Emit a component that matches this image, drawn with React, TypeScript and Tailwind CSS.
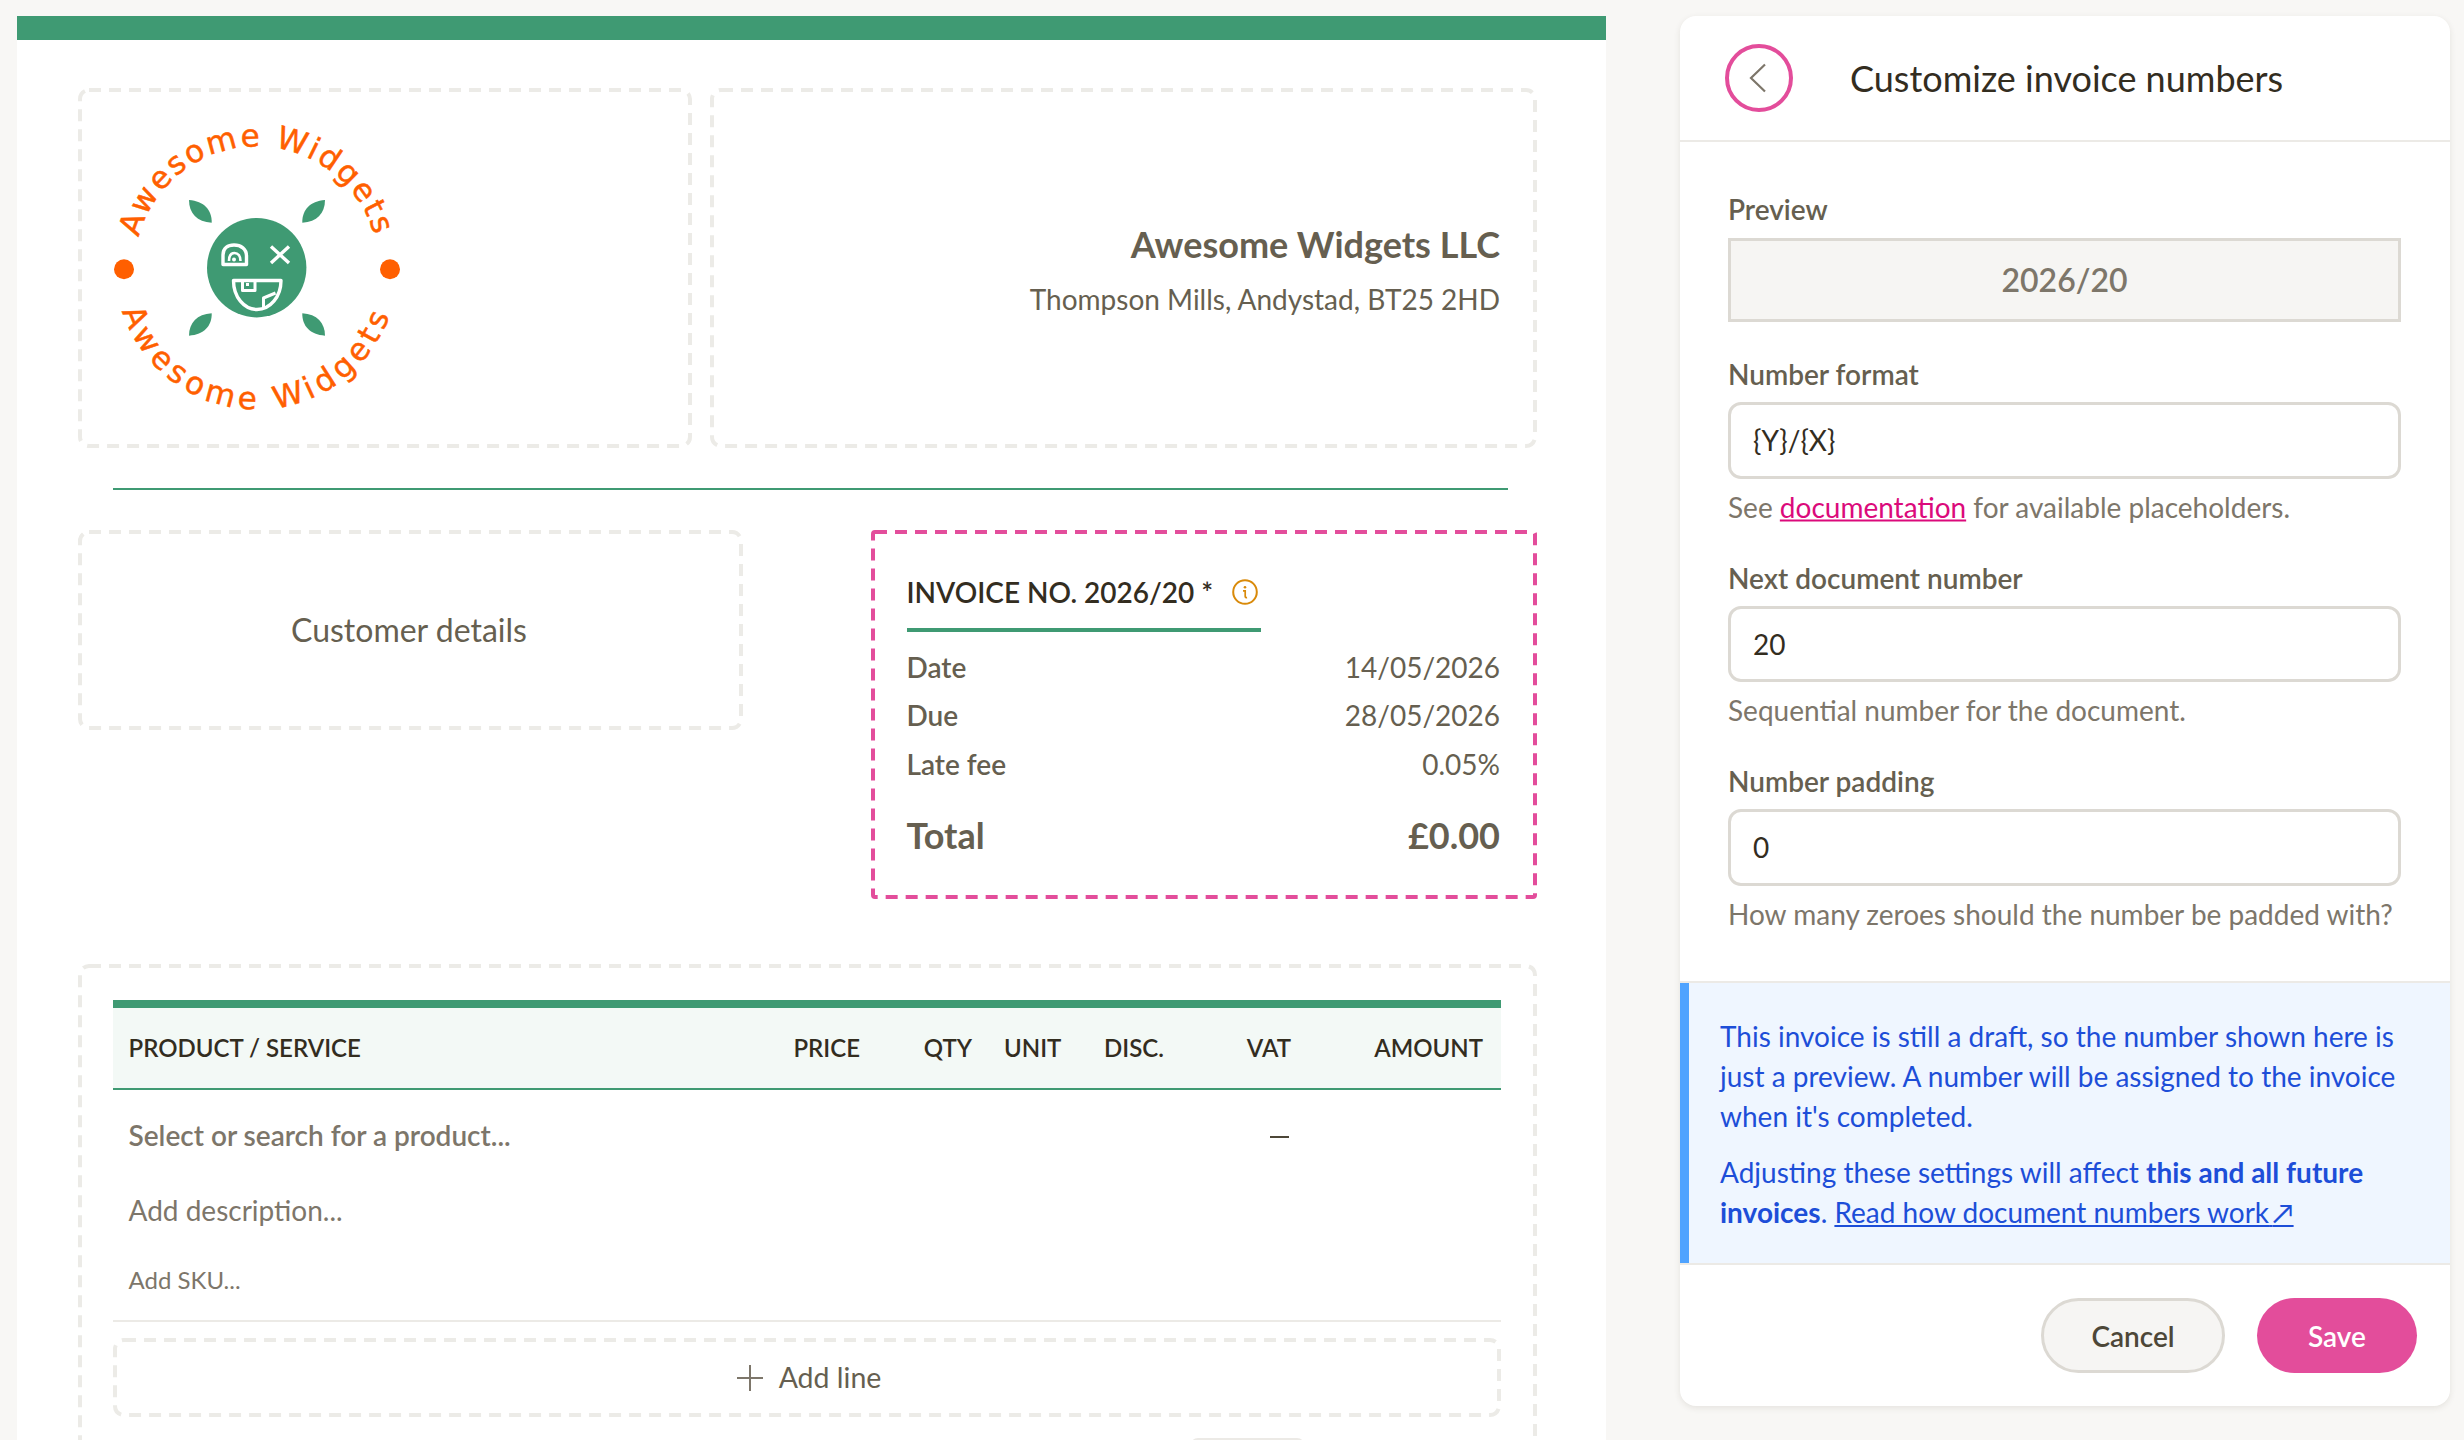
import React from "react";

function DashedBorder({ pink = false }: { pink?: boolean }) {
  return (
    <svg className="absolute inset-0 w-full h-full pointer-events-none" aria-hidden="true">
      <rect
        x="2"
        y="2"
        className="w-[calc(100%-4px)] h-[calc(100%-4px)]"
        rx={pink ? 2 : 9}
        fill="none"
        stroke={pink ? "#e34d9b" : "#ecebe7"}
        strokeWidth="4"
        strokeDasharray="12 8"
      />
    </svg>
  );
}

function Logo() {
  const green = "#3f9a73";
  const orange = "#ff5f00";
  return (
    <svg width="340" height="340" viewBox="0 0 340 340" className="block">
      <defs>
        <path id="arcTop" d="M 35.2 157.4 A 122 122 0 0 1 278.2 157.4" />
        <path id="arcBottom" d="M 16.2 180.3 A 141 141 0 0 0 297.2 180.3" />
      </defs>
      <text fontFamily="'DejaVu Sans', sans-serif" fontSize="31" fill={orange} stroke={orange} strokeWidth="0.5" letterSpacing="2.4" textAnchor="middle">
        <textPath href="#arcTop" startOffset="50%">Awesome Widgets</textPath>
      </text>
      <text fontFamily="'DejaVu Sans', sans-serif" fontSize="31" fill={orange} stroke={orange} strokeWidth="0.5" letterSpacing="4.8" textAnchor="middle">
        <textPath href="#arcBottom" startOffset="50%">Awesome Widgets</textPath>
      </text>
      <circle cx="24" cy="169.3" r="10" fill={orange} />
      <circle cx="290" cy="169.3" r="10" fill={orange} />
      <circle cx="156.7" cy="167.7" r="49.7" fill={green} />
      <path d="M89 100 C104 101 112 110 111.7 122.7 C97 122 89 113 89 100Z" fill={green} />
      <path d="M225 100 C210 101 202 110 202.3 122.7 C217 122 225 113 225 100Z" fill={green} />
      <path d="M89 235.7 C104 234.7 112 226 111.7 213.3 C97 214 89 223 89 235.7Z" fill={green} />
      <path d="M225 235.7 C210 234.7 202 226 202.3 213.3 C217 214 225 223 225 235.7Z" fill={green} />
      <g fill="none" stroke="#fff" strokeWidth="3.4" strokeLinejoin="round">
        <path d="M123 164.5 V155 C123 148 128 145 134 145 C141 145 146.5 149 146.5 156 V164.5 Z" />
        <path d="M129 161 C129 155 131 153 134.5 153 C138 153 140.5 156 140.5 161" strokeWidth="2.6" />
        <path d="M171 146.5 L189 163 M189 146.5 L171 163" />
        <path d="M133.5 180.5 H181 C181 197 170 209.5 157 209.5 C144 209.5 133.5 197 133.5 180.5Z" />
        <path d="M142.5 181 V190.5 H155 V181" strokeWidth="3" />
        <path d="M163.5 207 V198 L175.5 193" strokeWidth="3" />
      </g>
      <circle cx="134" cy="159.5" r="2" fill="#fff" />
      <rect x="146" y="183" width="3" height="3" fill="#fff" />
    </svg>
  );
}

function Field({ label, value, hint }: { label: string; value: string; hint: React.ReactNode }) {
  return (
    <div className="mb-[35px]">
      <div className="h-[36px] leading-[36px] mb-[10px] text-[28px] font-semibold text-[#665f50]">{label}</div>
      <div className="h-[76.5px] border-[3px] border-[#dcd9d3] rounded-[13px] flex items-center pl-[22px] text-[28px] text-[#332d1f] bg-white">
        {value}
      </div>
      <div className="h-[36px] leading-[36px] mt-[10px] -translate-y-[0.5px] text-[28px] text-[#7d766a] whitespace-nowrap">{hint}</div>
    </div>
  );
}

const grid = "grid grid-cols-[667px_96px_112px_100px_112px_107px_194px]";

export default function App() {
  return (
    <div className="w-[2464px] h-[1440px] overflow-hidden bg-[#f8f7f5] flex items-start pt-[16px] pl-[17px] gap-[74px] font-['Lato',sans-serif]">
      {/* Invoice page */}
      <div className="w-[1589px] h-[1424px] bg-white overflow-hidden flex-none">
        <div className="h-[24px] bg-[#3f9a73]" />
        <div className="pl-[61px] pr-[69px] pt-[48px]">
          <div className="flex gap-[18px] h-[360px]">
            <div className="relative w-[614px] h-full pl-[22px] pt-[12px]">
              <DashedBorder />
              <Logo />
            </div>
            <div className="relative flex-1 h-full pr-[37px] flex flex-col items-end pt-[132px]">
              <DashedBorder />
              <div className="text-[36px] leading-[48px] font-bold text-[#665f50]">Awesome Widgets LLC</div>
              <div className="text-[28px] leading-[40px] mt-[11px] text-[#665f50]">Thompson Mills, Andystad, BT25 2HD</div>
            </div>
          </div>

          <div className="mt-[40px] ml-[35px] mr-[29px] h-[2px] bg-[#3f9a73]" />

          <div className="mt-[40px] flex justify-between items-start">
            <div className="relative w-[665px] h-[200px] flex items-center justify-center">
              <DashedBorder />
              <span className="text-[32px] leading-[40px] text-[#665f50] mr-[3px]">Customer details</span>
            </div>
            <div className="relative w-[666px] h-[369px] pl-[35.5px] pr-[37px] pt-[36px]">
              <DashedBorder pink />
              <div className="w-[354px] border-b-[4px] border-[#3f9a73] h-[66px] flex items-start">
                <span className="text-[28px] leading-[52px] font-semibold text-[#332d1f] whitespace-nowrap">INVOICE NO. 2026/20 *</span>
                <svg width="26" height="26" viewBox="0 0 26 26" className="ml-[19px] mt-[13px] flex-none" fill="none">
                  <circle cx="13" cy="13" r="11.8" stroke="#d98a0a" strokeWidth="2" />
                  <circle cx="13" cy="8.2" r="1.3" fill="#d98a0a" />
                  <path d="M11 11.8 H13.2 V17.6 C13.2 18.6 13.8 18.8 15 18.4" stroke="#d98a0a" strokeWidth="1.7" />
                </svg>
              </div>
              <div className="mt-[10.5px] text-[28px] text-[#665f50]">
                <div className="h-[48.5px] flex items-center justify-between"><span className="font-semibold">Date</span><span>14/05/2026</span></div>
                <div className="h-[48.5px] flex items-center justify-between"><span className="font-semibold">Due</span><span>28/05/2026</span></div>
                <div className="h-[48.5px] flex items-center justify-between"><span className="font-semibold">Late fee</span><span>0.05%</span></div>
              </div>
              <div className="mt-[22px] h-[50px] flex items-center justify-between text-[36px] font-bold text-[#665f50]">
                <span>Total</span>
                <span>£0.00</span>
              </div>
            </div>
          </div>

          <div className="relative mt-[65px] h-[700px] pl-[35px] pr-[36px] pt-[36px]">
            <DashedBorder />
            <div className="h-[90px] border-t-[8px] border-b-[2px] border-[#3f9a73] bg-[#f3f9f6]">
              <div className={`${grid} h-full items-center text-[24px] font-semibold text-[#332d1f]`}>
                <div className="pl-[15.5px]">PRODUCT / SERVICE</div>
                <div className="text-right pr-[16px]">PRICE</div>
                <div className="text-right pr-[16px]">QTY</div>
                <div className="pl-[16px]">UNIT</div>
                <div className="pl-[16px]">DISC.</div>
                <div className="text-right pr-[16px]">VAT</div>
                <div className="text-right pr-[18px]">AMOUNT</div>
              </div>
            </div>
            <div className={`${grid} h-[94px] items-center text-[28px]`}>
              <div className="pl-[15.5px] -mt-[4px] font-semibold text-[#7d766a] whitespace-nowrap">Select or search for a product...</div>
              <div />
              <div />
              <div />
              <div />
              <div className="flex justify-end pr-[18px]"><div className="w-[19px] h-[2.5px] bg-[#4d4738]" /></div>
              <div />
            </div>
            <div className="h-[52px] leading-[52px] pl-[15.5px] text-[28px] text-[#7d766a]">Add description...</div>
            <div className="mt-[18px] h-[52px] leading-[52px] pl-[15.5px] text-[24px] text-[#7d766a]">Add SKU...</div>
            <div className="mt-[14px] h-[2px] bg-[#eceae6]" />
            <div className="relative mt-[16px] h-[79px] flex items-center justify-center gap-[15px] text-[28.5px] text-[#665f50] pl-[3px]">
              <DashedBorder />
              <svg width="28" height="28" viewBox="0 0 28 28" fill="none" stroke="#7d766a" strokeWidth="2">
                <path d="M14 1 V27 M1 14 H27" />
              </svg>
              <span>Add line</span>
            </div>
            <div className="mt-[21px] ml-[1077px] w-[115px] h-[8px] rounded-t-[8px] bg-[#eceae6]" />
          </div>
        </div>
      </div>

      {/* Side panel */}
      <div className="w-[770px] h-[1390px] bg-white rounded-[16px] shadow-[0_2px_6px_rgba(60,50,30,0.1)] flex-none flex flex-col overflow-hidden">
        <div className="h-[126px] border-b-[2px] border-[#eceae6] flex items-center pl-[45px]">
          <div className="w-[68px] h-[68px] rounded-full border-[4px] border-[#e34d9b] flex items-center justify-center">
            <svg width="24" height="32" viewBox="0 0 24 32" fill="none" stroke="#7d766a" strokeWidth="2.2">
              <path d="M18 2.5 L4 16 L18 29.5" />
            </svg>
          </div>
          <div className="ml-[57px] text-[36px] leading-[48px] text-[#332d1f]">Customize invoice numbers</div>
        </div>
        <div className="pl-[48px] pr-[49px] pt-[49px] flex-none">
          <div className="mb-[34px]">
            <div className="h-[36px] leading-[36px] mb-[11px] text-[28px] font-semibold text-[#665f50]">Preview</div>
            <div className="h-[84px] border-[3px] border-[#dcd9d3] bg-[#f6f5f3] flex items-center justify-center text-[32px] font-semibold text-[#7d766a]">2026/20</div>
          </div>
          <Field
            label="Number format"
            value="{Y}/{X}"
            hint={<>See <span className="text-[#db0a7b] underline">documentation</span> for available placeholders.</>}
          />
          <Field label="Next document number" value="20" hint="Sequential number for the document." />
          <Field label="Number padding" value="0" hint="How many zeroes should the number be padded with?" />
        </div>
        <div className="mt-[14.5px] border-y-[2px] border-[#eceae6] bg-[#eff6ff] flex-none">
          <div className="border-l-[9px] border-[#4fa3ff] pl-[31px] pr-[20px] pt-[33px] pb-[31px] text-[28px] leading-[40px] text-[#1d4ed8]">
            <p className="mb-[16px]">This invoice is still a draft, so the number shown here is just a preview. A number will be assigned to the invoice when it's completed.</p>
            <p>
              Adjusting these settings will affect <b className="font-bold">this and all future</b>
              <br />
              <b className="font-bold">invoices</b>. <span className="underline">Read how document numbers work{"\u2009"}↗</span>
            </p>
          </div>
        </div>
        <div className="flex justify-end gap-[32px] pt-[33px] pr-[33px]">
          <div className="w-[184px] h-[75px] rounded-full border-[3px] border-[#dcd9d3] bg-[#f6f5f3] flex items-center justify-center text-[28px] font-semibold text-[#4d4738]">Cancel</div>
          <div className="w-[160px] h-[75px] rounded-full bg-[#e34d9b] flex items-center justify-center text-[28px] font-semibold text-white">Save</div>
        </div>
      </div>
    </div>
  );
}
